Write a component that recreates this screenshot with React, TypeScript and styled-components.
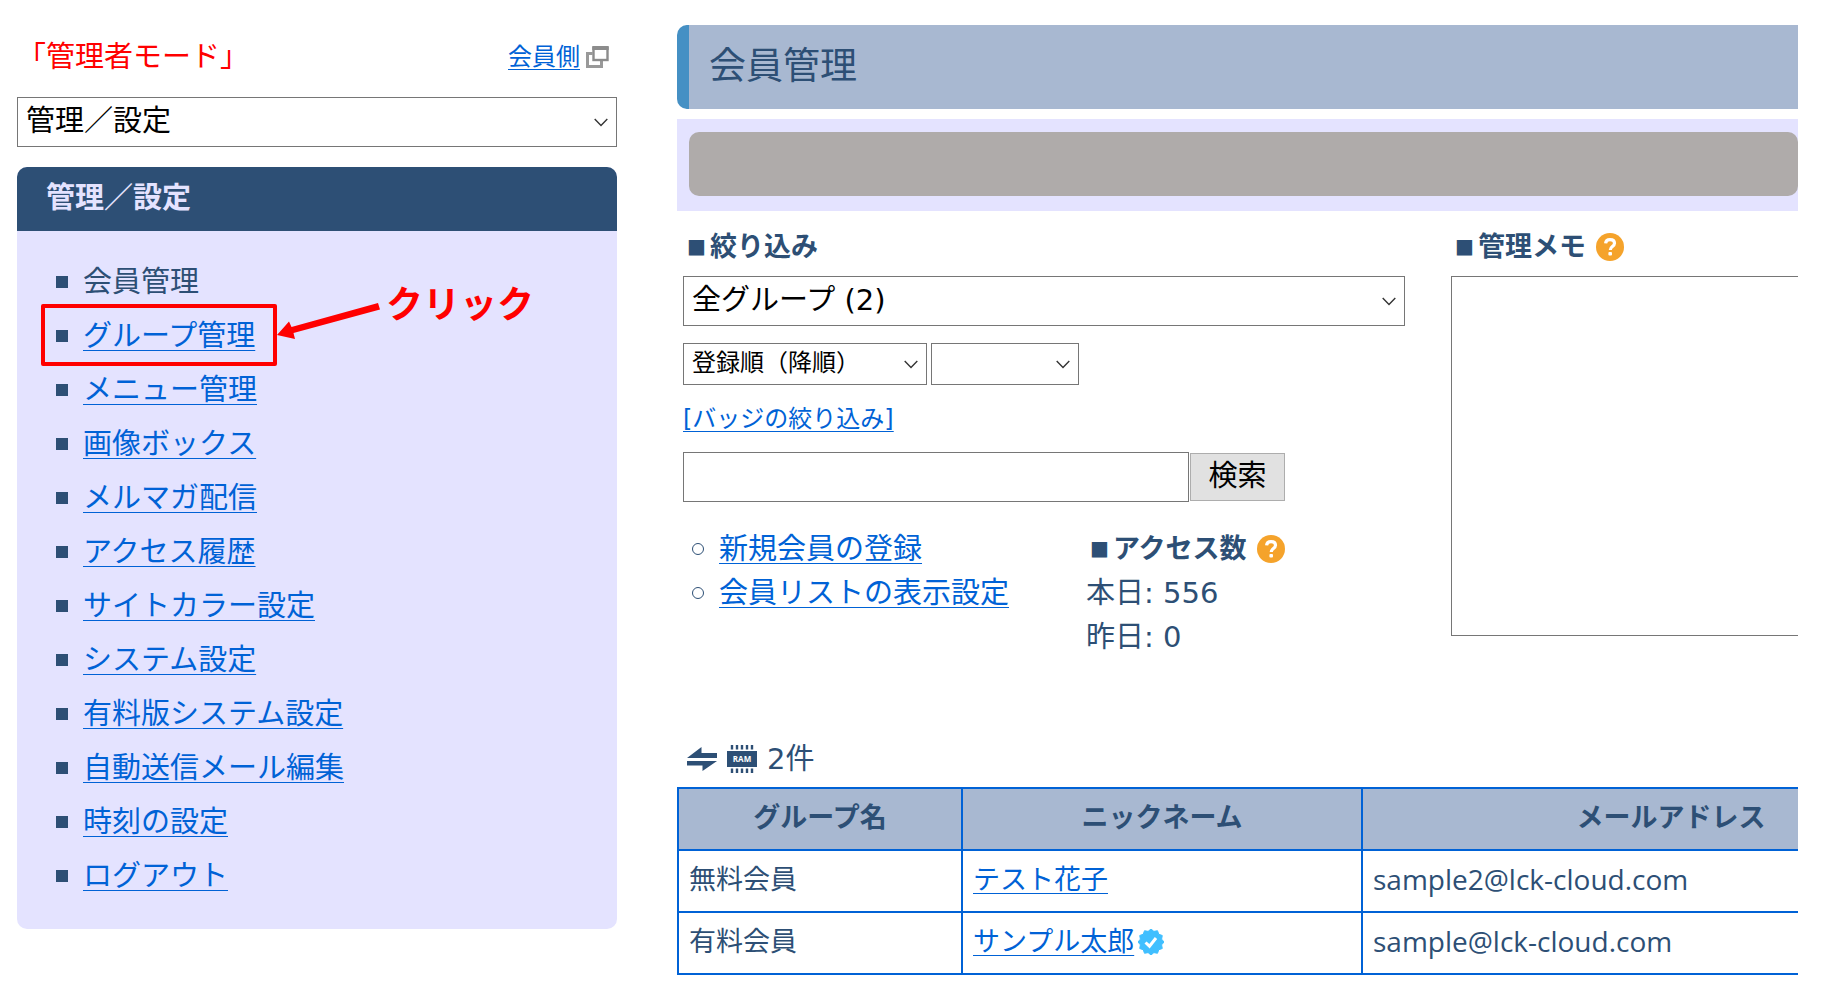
import React from "react";
import styled, { createGlobalStyle } from "styled-components";

const ink = "#2d4f75";
const link = "#0062d6";
const lavender = "#e4e3ff";
const steel = "#a8b8d1";

const GlobalStyle = createGlobalStyle`
  *, *::before, *::after { box-sizing: border-box; }
  body { margin: 0; background: #fff; }
  body, button, input, select, textarea {
    font-family: "DejaVu Sans", "Noto Sans CJK JP", sans-serif;
  }
`;

const Page = styled.div`
  display: grid;
  grid-template-columns: minmax(0, 600fr) minmax(0, 1121fr);
  column-gap: 60px;
  padding: 25px 25px 25px 17px;
  color: ${ink};
  font-size: 29px;
  line-height: 44px;
`;

const Link = styled.a`
  color: ${link};
  text-decoration: underline;
  text-decoration-thickness: 1px;
  text-underline-offset: 4px;
`;

const SmallLink = styled(Link)`
  font-size: 24px;
  line-height: 36px;
`;

const FilterLink = styled.div`
  display: flex;
`;

/* ---------- sidebar ---------- */

const Sidebar = styled.aside`
  display: flex;
  flex-direction: column;
`;

const ModeBar = styled.div`
  display: flex;
  align-items: center;
  justify-content: space-between;
  height: 64px;
  margin-bottom: 8px;
  padding-right: 8px;
`;

const Mode = styled.strong`
  color: #f00;
  font-weight: 400;
`;

const MemberSide = styled.span`
  display: flex;
  align-items: center;
  gap: 6px;
`;

const SelectBox = styled.div<{ $small?: boolean; $width?: string }>`
  position: relative;
  width: ${(p) => p.$width ?? "100%"};
  height: ${(p) => (p.$small ? 42 : 50)}px;
  font-size: ${(p) => (p.$small ? 24 : 29)}px;

  select {
    appearance: none;
    display: block;
    width: 100%;
    height: 100%;
    margin: 0;
    padding: 0 40px 2px 8px;
    border: 1px solid #767676;
    border-radius: 0;
    background: #fff;
    color: #000;
    font-size: inherit;
  }

  svg {
    position: absolute;
    right: 9px;
    top: 50%;
    margin-top: -4px;
    pointer-events: none;
  }
`;

const Panel = styled.nav`
  margin-top: 20px;
  border-radius: 10px;
  overflow: hidden;
  background: ${lavender};
`;

const PanelTitle = styled.h2`
  margin: 0;
  padding: 9px 29px 11px;
  background: ${ink};
  color: ${lavender};
  font-size: 29px;
  line-height: 44px;
`;

const Menu = styled.ul`
  list-style: none;
  margin: 0;
  padding: 24px 39px 26px;
`;

const MenuItem = styled.li`
  position: relative;
  display: flex;
  align-items: center;
  gap: 15px;
  height: 54px;

  &::before {
    content: "";
    width: 12px;
    height: 12px;
    background: ${ink};
  }
`;

const Highlight = styled.span`
  position: absolute;
  left: -15px;
  top: -5px;
  width: 236px;
  height: 62px;
  border: 4px solid #f00;
  border-radius: 2px;
  pointer-events: none;
`;

const Arrow = styled.svg`
  position: absolute;
  left: 221px;
  top: -8px;
`;

const ClickNote = styled.span`
  position: absolute;
  left: 330px;
  top: -27px;
  color: #f00;
  font-size: 37px;
  font-weight: 700;
  line-height: 48px;
`;

/* ---------- main ---------- */

const Main = styled.main`
  overflow: hidden;
`;

const PageTitle = styled.h1`
  margin: 0 0 10px;
  padding: 14px 20px;
  border-left: 12px solid #4590c4;
  border-radius: 10px 0 0 10px;
  background: ${steel};
  font-size: 37px;
  font-weight: 400;
  line-height: 56px;
`;

const Notice = styled.div`
  padding: 13px 0 15px 12px;
  background: ${lavender};
`;

const NoticeBody = styled.div`
  height: 64px;
  border-radius: 10px;
  background: #afabaa;
`;

const Tools = styled.div`
  display: grid;
  grid-template-columns: 722px minmax(0, 1fr);
  column-gap: 46px;
  margin-top: 16px;
  padding: 0 0 78px 6px;
`;

const Column = styled.section`
  min-width: 0;
`;

const Heading = styled.h3`
  display: flex;
  align-items: center;
  margin: 0 0 9px;
  padding-left: 4px;
  font-size: 27px;
  line-height: 40px;

  svg {
    margin-left: 10px;
  }
`;

const Square = styled.span`
  margin-right: 4px;
  padding-bottom: 2px;
  font-size: 20px;
  font-weight: 400;
  line-height: 38px;
`;

const Sorters = styled.div`
  display: flex;
  gap: 4px;
  margin: 17px 0 16px;
`;

const Search = styled.form`
  display: flex;
  align-items: center;
  gap: 1px;
  margin: 15px 0 25px;
`;

const SearchInput = styled.input`
  width: 506px;
  height: 50px;
  padding: 0 8px;
  border: 1px solid #767676;
  font-size: 29px;
`;

const SearchButton = styled.button`
  width: 95px;
  height: 48px;
  padding: 0 0 2px;
  border: 1px solid #adadad;
  background: #e1e1e1;
  color: #000;
  font-size: 29px;
  line-height: 42px;
`;

const Summary = styled.div`
  display: grid;
  grid-template-columns: 403px minmax(0, 1fr);
`;

const Actions = styled.ul`
  list-style: none;
  margin: 0;
  padding: 0 0 0 9px;

  li {
    display: flex;
    align-items: center;
    gap: 15px;
  }

  li::before {
    content: "";
    width: 12px;
    height: 12px;
    border: 1px solid ${ink};
    border-radius: 50%;
  }
`;

const Access = styled.div`
  ${Heading} {
    margin: 0;
    line-height: 44px;
  }
`;

const AccessLine = styled.div``;

const Memo = styled.textarea`
  display: block;
  width: 560px;
  height: 360px;
  border: 1px solid #767676;
  border-radius: 0;
  resize: none;
  font-size: 29px;
`;

const ListBar = styled.div`
  display: flex;
  align-items: center;
  gap: 10px;
  height: 44px;
  margin-bottom: 6px;
  padding-left: 10px;
  font-size: 29px;
`;

const Members = styled.table`
  table-layout: fixed;
  width: 1304px;
  border-collapse: collapse;
  font-size: 27px;
  line-height: 40px;

  th, td {
    height: 62px;
    padding: 0 10px 2px;
    border: 2px solid ${link};
    text-align: left;
  }

  th {
    background: ${steel};
    text-align: center;
  }
`;

const Col = styled.col<{ $w: number }>`
  width: ${(p) => p.$w}px;
`;

const Mail = styled.span`
  font-family: "Open Sans", sans-serif;
  font-size: 28px;
`;

const Nick = styled.span`
  display: flex;
  align-items: center;
  gap: 4px;
`;

/* ---------- icons ---------- */

const Chevron = () => (
  <svg width="14" height="9" viewBox="0 0 14 9" fill="none" stroke="#333" strokeWidth="1.4">
    <path d="M0.7 1 7 7.4 13.3 1" />
  </svg>
);

const WindowsIcon = () => (
  <svg width="23" height="22" viewBox="0 0 23 22" fill="none" stroke="#8c8c8c">
    <path d="M6.5 7.5H1.5V20.5H15.5V15" stroke="#999" strokeWidth="3" />
    <rect x="7.5" y="2" width="14" height="12" fill="#fff" strokeWidth="2.4" />
    <path d="M6.3 2H22.7" strokeWidth="4" />
  </svg>
);

const HelpIcon = () => (
  <svg width="28" height="28" viewBox="0 0 28 28" fill="none">
    <circle cx="14" cy="14" r="14" fill="#f5a32b" />
    <path
      d="M9.6 10.4C9.8 7.8 11.5 6.6 14 6.6c2.6 0 4.5 1.4 4.5 3.7 0 3.3-4.2 3.2-4.2 6.6"
      stroke="#fff"
      strokeWidth="3.2"
    />
    <rect x="12.4" y="19" width="3.6" height="3.6" rx="1" fill="#fff" />
  </svg>
);

const SwapIcon = () => (
  <svg width="30" height="24" viewBox="0 0 30 24" fill={ink}>
    <path d="M0 11 14.5 0V6H30V11Z" />
    <path d="M30 14 15.5 24V18.5H0V14Z" />
  </svg>
);

const RamIcon = () => (
  <svg width="30" height="28" viewBox="0 0 30 28" fill={ink}>
    <path
      d="M5 0V28M10 0V28M15 0V28M20 0V28M25 0V28"
      stroke={ink}
      strokeWidth="2.4"
      strokeDasharray="4.5 19"
    />
    <rect y="6" width="30" height="16" />
    <text x="15" y="17" fill="#fff" fontFamily="Open Sans, sans-serif" fontSize="8" fontWeight="700" textAnchor="middle">
      RAM
    </text>
  </svg>
);

const badgePoints = Array.from({ length: 24 }, (_, i) => {
  const r = i % 2 ? 11 : 13;
  const a = (i * Math.PI) / 12;
  return `${(13 + r * Math.sin(a)).toFixed(2)},${(13 - r * Math.cos(a)).toFixed(2)}`;
}).join(" ");

const BadgeIcon = () => (
  <svg width="26" height="26" viewBox="0 0 26 26">
    <polygon points={badgePoints} fill="#40bfff" stroke="#40bfff" strokeLinejoin="round" />
    <path d="M7.5 13.5 11.5 17.2 18 9" fill="none" stroke="#fff" strokeWidth="3" />
  </svg>
);

/* ---------- content ---------- */

const menu = [
  "会員管理",
  "グループ管理",
  "メニュー管理",
  "画像ボックス",
  "メルマガ配信",
  "アクセス履歴",
  "サイトカラー設定",
  "システム設定",
  "有料版システム設定",
  "自動送信メール編集",
  "時刻の設定",
  "ログアウト",
];

const members = [
  { group: "無料会員", name: "テスト花子", mail: "sample2@lck-cloud.com", verified: false },
  { group: "有料会員", name: "サンプル太郎", mail: "sample@lck-cloud.com", verified: true },
];

type PickerProps = { label: string; value: string; small?: boolean; width?: string };

const Picker = ({ label, value, small, width }: PickerProps) => (
  <SelectBox $small={small} $width={width}>
    <select aria-label={label}>
      <option>{value}</option>
    </select>
    <Chevron />
  </SelectBox>
);

export default function App() {
  return (
    <>
      <GlobalStyle />
      <Page>
        <Sidebar>
          <ModeBar>
            <Mode>「管理者モード」</Mode>
            <MemberSide>
              <SmallLink href="#">会員側</SmallLink>
              <WindowsIcon />
            </MemberSide>
          </ModeBar>
          <Picker label="メニュー" value="管理／設定" />
          <Panel>
            <PanelTitle>管理／設定</PanelTitle>
            <Menu>
              {menu.map((item, i) => (
                <MenuItem key={item}>
                  {i === 0 ? <span>{item}</span> : <Link href="#">{item}</Link>}
                  {i === 1 && (
                    <>
                      <Highlight />
                      <Arrow width="104" height="50" viewBox="0 0 104 50" fill="#f00">
                        <path d="M101 2 103 8.5 16.5 32 18 38 0 34 12 20.5 14.5 26Z" />
                      </Arrow>
                      <ClickNote>クリック</ClickNote>
                    </>
                  )}
                </MenuItem>
              ))}
            </Menu>
          </Panel>
        </Sidebar>

        <Main>
          <PageTitle>会員管理</PageTitle>
          <Notice>
            <NoticeBody />
          </Notice>
          <Tools>
            <Column>
              <Heading>
                <Square>■</Square>絞り込み
              </Heading>
              <Picker label="グループ" value="全グループ (2)" />
              <Sorters>
                <Picker label="並び順" value="登録順（降順）" small width="244px" />
                <Picker label="条件" value="" small width="148px" />
              </Sorters>
              <FilterLink>
                <SmallLink href="#">[バッジの絞り込み]</SmallLink>
              </FilterLink>
              <Search onSubmit={(e) => e.preventDefault()}>
                <SearchInput type="text" aria-label="検索語" />
                <SearchButton type="submit">検索</SearchButton>
              </Search>
              <Summary>
                <Actions>
                  <li>
                    <Link href="#">新規会員の登録</Link>
                  </li>
                  <li>
                    <Link href="#">会員リストの表示設定</Link>
                  </li>
                </Actions>
                <Access>
                  <Heading>
                    <Square>■</Square>アクセス数
                    <HelpIcon />
                  </Heading>
                  <AccessLine>本日: 556</AccessLine>
                  <AccessLine>昨日: 0</AccessLine>
                </Access>
              </Summary>
            </Column>
            <Column>
              <Heading>
                <Square>■</Square>
                <label htmlFor="memo">管理メモ</label>
                <HelpIcon />
              </Heading>
              <Memo id="memo" />
            </Column>
          </Tools>
          <ListBar>
            <SwapIcon />
            <RamIcon />
            <span>2件</span>
          </ListBar>
          <Members>
            <colgroup>
              <Col $w={284} />
              <Col $w={400} />
              <Col $w={618} />
            </colgroup>
            <thead>
              <tr>
                <th>グループ名</th>
                <th>ニックネーム</th>
                <th>メールアドレス</th>
              </tr>
            </thead>
            <tbody>
              {members.map((m) => (
                <tr key={m.name}>
                  <td>{m.group}</td>
                  <td>
                    <Nick>
                      <Link href="#">{m.name}</Link>
                      {m.verified && <BadgeIcon />}
                    </Nick>
                  </td>
                  <td>
                    <Mail>{m.mail}</Mail>
                  </td>
                </tr>
              ))}
            </tbody>
          </Members>
        </Main>
      </Page>
    </>
  );
}
